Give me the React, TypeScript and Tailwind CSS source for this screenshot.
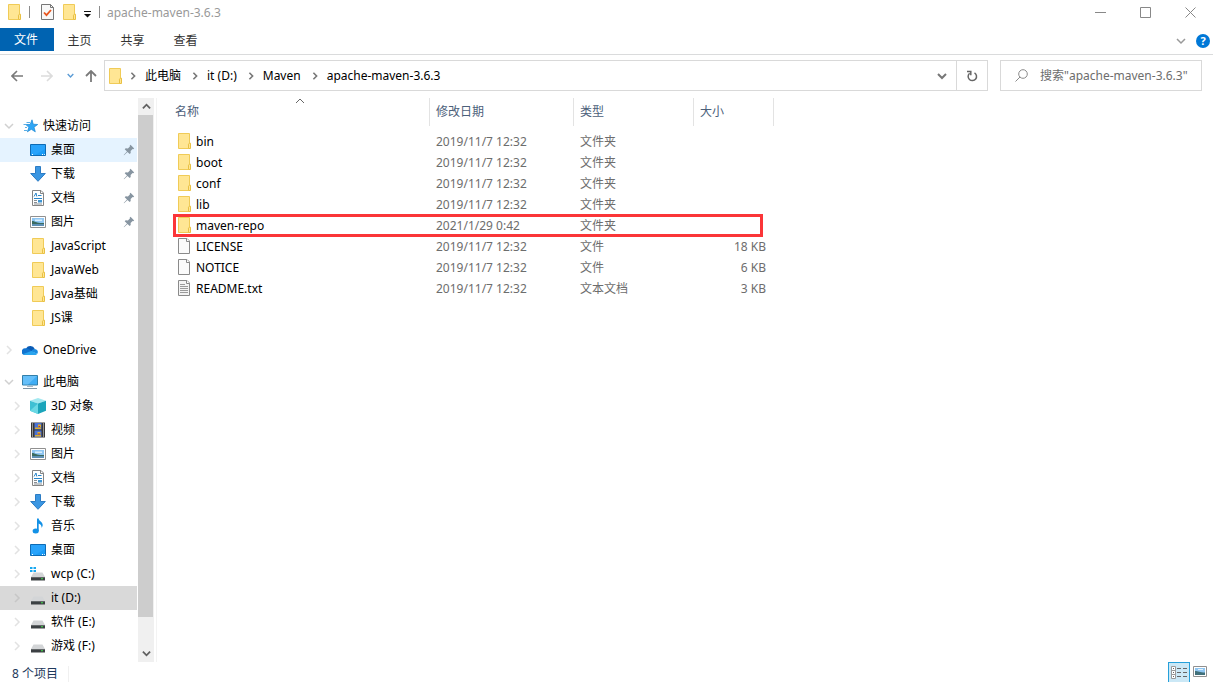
import type { ReactNode } from "react";
import clsx from "clsx";

type IconName =
  | "star"
  | "desktop"
  | "download"
  | "document"
  | "picture"
  | "folder"
  | "onedrive"
  | "pc"
  | "cube"
  | "video"
  | "music"
  | "systemDrive"
  | "drive";

type NavItem = {
  label: string;
  icon: IconName;
  pinned?: boolean;
  expandable?: boolean;
  state?: "hover" | "selected";
};

type NavGroup = {
  label: string;
  icon: IconName;
  open?: boolean;
  items: NavItem[];
};

const navGroups: NavGroup[] = [
  {
    label: "快速访问",
    icon: "star",
    open: true,
    items: [
      { label: "桌面", icon: "desktop", pinned: true, state: "hover" },
      { label: "下载", icon: "download", pinned: true },
      { label: "文档", icon: "document", pinned: true },
      { label: "图片", icon: "picture", pinned: true },
      { label: "JavaScript", icon: "folder" },
      { label: "JavaWeb", icon: "folder" },
      { label: "Java基础", icon: "folder" },
      { label: "JS课", icon: "folder" },
    ],
  },
  { label: "OneDrive", icon: "onedrive", items: [] },
  {
    label: "此电脑",
    icon: "pc",
    open: true,
    items: [
      { label: "3D 对象", icon: "cube", expandable: true },
      { label: "视频", icon: "video", expandable: true },
      { label: "图片", icon: "picture", expandable: true },
      { label: "文档", icon: "document", expandable: true },
      { label: "下载", icon: "download", expandable: true },
      { label: "音乐", icon: "music", expandable: true },
      { label: "桌面", icon: "desktop", expandable: true },
      { label: "wcp (C:)", icon: "systemDrive", expandable: true },
      { label: "it (D:)", icon: "drive", expandable: true, state: "selected" },
      { label: "软件 (E:)", icon: "drive", expandable: true },
      { label: "游戏 (F:)", icon: "drive", expandable: true },
    ],
  },
];

const files = [
  { name: "bin", date: "2019/11/7 12:32", type: "文件夹", size: "", kind: "folder" },
  { name: "boot", date: "2019/11/7 12:32", type: "文件夹", size: "", kind: "folder" },
  { name: "conf", date: "2019/11/7 12:32", type: "文件夹", size: "", kind: "folder" },
  { name: "lib", date: "2019/11/7 12:32", type: "文件夹", size: "", kind: "folder" },
  { name: "maven-repo", date: "2021/1/29 0:42", type: "文件夹", size: "", kind: "folder", marked: true },
  { name: "LICENSE", date: "2019/11/7 12:32", type: "文件", size: "18 KB", kind: "file" },
  { name: "NOTICE", date: "2019/11/7 12:32", type: "文件", size: "6 KB", kind: "file" },
  { name: "README.txt", date: "2019/11/7 12:32", type: "文本文档", size: "3 KB", kind: "text" },
];

const crumbs = ["此电脑", "it (D:)", "Maven", "apache-maven-3.6.3"];

const Folder = () => (
  <svg width="14" height="16" viewBox="0 0 14 16" className="shrink-0" aria-hidden="true">
    <path d="M.5.5h11v9.7l-1 .8v4.500H.5z" fill="#ffe694" stroke="#f0cb57" />
    <path d="M10.500 15.500v-4.200l1-1.100h1v5.300z" fill="#ffe694" stroke="#e9c043" />
  </svg>
);

const Page = ({ lines }: { lines?: boolean }) => (
  <svg width="14" height="16" viewBox="0 0 14 16" className="shrink-0" aria-hidden="true">
    <path d="M.5.5h8.500l2.500 2.500v12.500H.5z" fill={lines ? "#f4f4f4" : "#fbfbfb"} stroke="#8a8a8a" />
    <path d="M8.500.5v3h3" fill="#fff" stroke="#8a8a8a" />
    {lines && <path d="M2 4.500h5M2 6.500h8M2 8.500h8M2 10.500h8M2 12.500h8" stroke="#9b9b9b" />}
  </svg>
);

type ChevronProps = { dir: "up" | "down" | "right"; size?: number; weight?: number; className?: string };

const chevronPath = {
  up: "M1 7l4-4 4 4",
  down: "M1 3l4 4 4-4",
  right: "M3 1l4 4-4 4",
};

const Chevron = ({ dir, size = 10, weight = 1, className }: ChevronProps) => (
  <svg
    width={size}
    height={size}
    viewBox="0 0 10 10"
    fill="none"
    stroke="currentColor"
    strokeWidth={weight}
    className={clsx("shrink-0", className)}
    aria-hidden="true"
  >
    <path d={chevronPath[dir]} />
  </svg>
);

const drivePaths = (
  <>
    <path d="M3.500 6.500h9L15 11H1z" fill="#d3d5d7" />
    <path d="M1 11h14v3.500H1z" fill="#3c4043" />
    <path d="M1 11h14v.8H1z" fill="#6d7174" />
    <path d="M11 12.300h2v1h-2z" fill="#41e04b" />
  </>
);

const iconArt: Record<IconName, ReactNode> = {
  folder: null,
  star: (
    <>
      <path d="M10 1.800l1.200 4.400 4.500.3-3.700 2.700 1.300 4.600-4-2.500-3.900 2.500 1.500-4.500-3-2.700 4.300-.2z" fill="#2ea6f6" stroke="#1484d2" strokeWidth=".7" />
      <path d="M4.500 4.500h3.500M1.500 6.500h3M3 9.500h2M2 12.500h3" stroke="#59aee6" />
    </>
  ),
  desktop: (
    <>
      <path d="M.5 2.500h15v11H.5z" fill="#1b9cf7" stroke="#0e6bb4" />
      <path d="M1 3h14v4L5 13H1z" fill="#3aaeff" opacity=".45" />
      <path d="M2 12.500h1M12 12.500h1M14 12.500h.8" stroke="#fff" />
    </>
  ),
  download: <path d="M5.500.5h5v7h4.800L8 15.300.7 7.500h4.800z" fill="#3a96e2" stroke="#2c7cc4" />,
  document: (
    <>
      <path d="M2.500.5h8.500l2.500 2.500v12.500h-11z" fill="#fff" stroke="#858585" />
      <path d="M10.500.5v3h3" fill="none" stroke="#858585" />
      <path d="M4 6.500l2-3.500.8 3.500M8 5.500h3.500M4 8.500h8" fill="none" stroke="#2986c9" />
      <path d="M4 10.500h3M4 12.500h3M4 14h8" stroke="#8a8f94" />
      <path d="M8 10h4v2.500H8z" fill="#3f96d4" />
    </>
  ),
  picture: (
    <>
      <path d="M.5 2.500h15v11H.5z" fill="#fff" stroke="#909090" />
      <path d="M2 4h12v8H2z" fill="#8fc6f2" />
      <path d="M5 5.500h7v1.500H5z" fill="#d9eefc" />
      <path d="M2 7c3 0 5 2.500 12 2v1H2z" fill="#3b6b60" />
      <path d="M2 10h12v2H2z" fill="#5d8fb4" />
    </>
  ),
  onedrive: (
    <>
      <path d="M4 6.500A5 5 0 0 1 12.800 7L8 11z" fill="#0a5bb5" />
      <path d="M3.800 6.300a3.600 3.600 0 0 1 2.800.7L11 10l-8.500 3A3.400 3.400 0 0 1 3.800 6.300z" fill="#1173cf" />
      <path d="M12.600 6.900a3.100 3.100 0 0 1 2.700 4.800L9 9.500a5 5 0 0 1 3.600-2.600z" fill="#1a8ae0" />
      <path d="M9.300 9l6 2.700c-.5.900-1.400 1.300-2.500 1.300H3.200c-.8 0-1.400-.3-1.900-.9z" fill="#29a4ee" />
    </>
  ),
  pc: (
    <>
      <path d="M.5 1.500h15v9.500H.5z" fill="#3fadf5" stroke="#327fa9" />
      <path d="M1 2h14l-9 8.500H1z" fill="#7fcbfb" opacity=".6" />
      <path d="M5 12.500h6" stroke="#a9b8c2" />
      <path d="M1 14.500h14" stroke="#7f96a6" />
    </>
  ),
  cube: (
    <>
      <path d="M8 0l8 2.800L8 5.500 0 2.800z" fill="#a3e8f0" />
      <path d="M0 2.800l8 2.700V16l-8-3.300z" fill="#3fc0d4" />
      <path d="M16 2.800L8 5.500V16l8-3.300z" fill="#1ba5bb" />
      <path d="M0 12.700l8-7.200V16z" fill="#6ad8e4" />
    </>
  ),
  video: (
    <>
      <path d="M1 .5h14v15H1z" fill="#383838" />
      <path d="M4.500 1h7v6.500h-7zM4.500 8.500h7V15h-7z" fill="#4a72d6" />
      <path d="M8 2.500h3v2.500H8zM5 5.500h6v1.500H5zM7.500 10h3v2.500h-3zM5 13h6v1.500H5z" fill="#e0ad2c" />
      <path d="M8.500 4h1.500v1H8.500zM8 11.500h2v1H8z" fill="#b53a2a" />
      <path d="M2.500 1.500v14M13.500 1.500v14" stroke="#f2f2f2" strokeDasharray="1 1" />
    </>
  ),
  music: (
    <>
      <path d="M7 .5h1.700c.2 2.600 4 3.400 4 6.500 0 1.200-.5 2-1.200 2.800.3-2.300-1-3.500-2.800-4.300V13H7z" fill="#1391e6" />
      <ellipse cx="5.700" cy="13" rx="3.100" ry="2.500" fill="#1391e6" />
    </>
  ),
  drive: drivePaths,
  systemDrive: (
    <>
      {drivePaths}
      <path d="M0 1h2.500v2H0zM3.500 1H6v2H3.500zM0 4h2.500v2H0zM3.500 4H6v2H3.500z" fill="#18a8f0" />
    </>
  ),
};

const Icon = ({ name }: { name: IconName }) =>
  name === "folder" ? (
    <span className="flex w-4 shrink-0 justify-end">
      <Folder />
    </span>
  ) : (
    <svg width="16" height="16" viewBox="0 0 16 16" className="shrink-0" aria-hidden="true">
      {iconArt[name]}
    </svg>
  );

const Pin = () => (
  <svg width="12" height="12" viewBox="0 0 12 12" className="ml-auto shrink-0" aria-hidden="true">
    <path d="M7.500.8l3.700 3.700-1 .7-.6-.1-2 2 .1 2-1 1L4.500 8 1 11.200l-.3-.3L4 7.400 1.700 5.200l1-1 2.200.2 2-2-.2-.7z" fill="#8795a1" />
  </svg>
);

const TitleBar = () => (
  <div className="mb-1 flex h-6 items-center pl-2">
    <Folder />
    <span className="ml-[7px] h-3 w-px bg-[#8c8c8c]" />
    <button type="button" aria-label="属性" className="ml-[11px]">
      <svg width="13" height="16" viewBox="0 0 13 16" aria-hidden="true">
        <path d="M.5.5h9l3 3v12H.5z" fill="#f8f8f8" stroke="#777" />
        <path d="M9.500.5v3h3" fill="none" stroke="#777" />
        <path d="M3 8.500l2.500 2.700L10 6" fill="none" stroke="#e8561f" strokeWidth="1.800" />
      </svg>
    </button>
    <button type="button" aria-label="新建文件夹" className="ml-[9px]">
      <Folder />
    </button>
    <button type="button" aria-label="自定义快速访问工具栏" className="ml-1.5 pt-1">
      <svg width="9" height="8" viewBox="0 0 9 8" aria-hidden="true">
        <path d="M1 1.500h7" stroke="#111" />
        <path d="M1 4h7L4.500 7.500z" fill="#111" />
      </svg>
    </button>
    <span className="ml-[7px] h-3 w-px bg-[#8c8c8c]" />
    <h1 className="ml-[7px] pt-0.5 text-[#999]">apache-maven-3.6.3</h1>
    <div className="ml-auto flex text-[#888]">
      <button type="button" aria-label="最小化" className="flex h-6 w-[45px] items-center justify-center">
        <svg width="11" height="11" viewBox="0 0 11 11" stroke="currentColor" aria-hidden="true">
          <path d="M0 5.500h11" />
        </svg>
      </button>
      <button type="button" aria-label="最大化" className="flex h-6 w-[45px] items-center justify-center">
        <svg width="11" height="11" viewBox="0 0 11 11" fill="none" stroke="currentColor" aria-hidden="true">
          <path d="M.5.5h10v10H.5z" />
        </svg>
      </button>
      <button type="button" aria-label="关闭" className="flex h-6 w-[45px] items-center justify-center">
        <svg width="11" height="11" viewBox="0 0 11 11" stroke="currentColor" aria-hidden="true">
          <path d="M.5.5l10 10M10.500.5l-10 10" />
        </svg>
      </button>
    </div>
  </div>
);

const Ribbon = () => (
  <div className="flex h-[27px] items-start border-b border-[#dadbdc]">
    <button type="button" className="h-[23px] w-[54px] bg-[#0063b1] pr-0.5 text-white">
      文件
    </button>
    {["主页", "共享", "查看"].map((tab) => (
      <button key={tab} type="button" className="h-[23px] w-[53px] pt-0.5 pr-0.5 text-[#333]">
        {tab}
      </button>
    ))}
    <div className="ml-auto flex h-[26px] items-center gap-2.5 pr-[3px]">
      <button type="button" aria-label="展开功能区">
        <Chevron dir="down" weight={1.5} className="text-[#999]" />
      </button>
      <button
        type="button"
        aria-label="帮助"
        className="flex size-3.5 items-center justify-center rounded-full bg-[#0078d7] text-[11px] font-bold text-white"
      >
        ?
      </button>
    </div>
  </div>
);

const AddressBar = () => (
  <div className="flex items-center pt-[5px] pr-[11px] pb-[7px] pl-[11px]">
    <button type="button" aria-label="后退" className="text-[#7a7a7a]">
      <svg width="12" height="12" viewBox="0 0 12 12" fill="none" stroke="currentColor" strokeWidth="1.600" aria-hidden="true">
        <path d="M12 6H1M6 1L1 6l5 5" />
      </svg>
    </button>
    <button type="button" aria-label="前进" className="ml-[18px] text-[#dcdcdc]">
      <svg width="12" height="12" viewBox="0 0 12 12" fill="none" stroke="currentColor" strokeWidth="1.600" aria-hidden="true">
        <path d="M0 6h11M6 1l5 5-5 5" />
      </svg>
    </button>
    <button type="button" aria-label="最近浏览的位置" className="ml-3.5">
      <Chevron dir="down" size={7} weight={2} className="text-[#5a9bd5]" />
    </button>
    <button type="button" aria-label="上移" className="ml-[11px] text-[#7a7a7a]">
      <svg width="12" height="12" viewBox="0 0 12 12" fill="none" stroke="currentColor" strokeWidth="1.800" aria-hidden="true">
        <path d="M6 12V1M1 6l5-5 5 5" />
      </svg>
    </button>
    <div className="ml-[7px] flex h-[31px] flex-1 items-center border border-[#d9d9d9] pl-1">
      <Folder />
      <nav aria-label="路径" className="-ml-1 flex items-center">
        {crumbs.map((crumb) => (
          <span key={crumb} className="flex items-center">
            <Chevron dir="right" size={8} weight={2} className="mr-2 ml-2.5 text-[#777]" />
            <a href="#">{crumb}</a>
          </span>
        ))}
      </nav>
      <button type="button" aria-label="上一个位置" className="ml-auto flex h-full w-[29px] items-center justify-center border-r border-[#d9d9d9]">
        <Chevron dir="down" weight={2} className="text-[#777]" />
      </button>
      <button type="button" aria-label="刷新" className="flex h-full w-[30px] items-center justify-center text-[#666]">
        <svg width="12" height="12" viewBox="0 0 12 12" fill="none" stroke="currentColor" strokeWidth="1.500" aria-hidden="true">
          <path d="M8.500 2.800A4.200 4.200 0 1 1 3.600 3.200" />
          <path d="M1 1.500h3.800v3.800" />
        </svg>
      </button>
    </div>
    <label className="ml-3 flex h-[31px] w-[202px] items-center border border-[#d9d9d9] pl-3.5">
      <svg width="13" height="13" viewBox="0 0 13 13" fill="none" stroke="#8b8b8b" className="shrink-0" aria-hidden="true">
        <circle cx="8" cy="5" r="4.300" />
        <path d="M5 8L.5 12.500" />
      </svg>
      <input
        type="text"
        aria-label="搜索"
        placeholder='搜索"apache-maven-3.6.3"'
        className="ml-3 w-full min-w-0 outline-none placeholder:text-[#6d6d6d] placeholder:opacity-100"
      />
    </label>
  </div>
);

const NavRow = ({ item }: { item: NavItem }) => (
  <a
    href="#"
    className={clsx(
      "mr-px flex h-6 items-center pr-0.5 pl-3",
      item.state === "hover" && "bg-[#e5f3ff]",
      item.state === "selected" && "bg-[#d9d9d9]",
    )}
  >
    <span className={clsx("mr-2 w-2.5", item.state === "selected" ? "text-[#c6c6c6]" : "text-[#e2e2e2]")}>
      {item.expandable && <Chevron dir="right" weight={1.5} />}
    </span>
    <Icon name={item.icon} />
    <span className="ml-[5px]">{item.label}</span>
    {item.pinned && <Pin />}
  </a>
);

const Sidebar = () => (
  <aside className="flex">
    <nav aria-label="导航窗格" className="flex w-[138px] flex-col gap-2 pt-4 pb-1">
      {navGroups.map((group) => (
        <div key={group.label}>
          <a href="#" className="flex h-6 items-center pl-1">
            <Chevron
              dir={group.open ? "down" : "right"}
              weight={1.5}
              className={clsx("mr-2", group.open ? "text-[#d0d0d0]" : "text-[#e2e2e2]")}
            />
            <Icon name={group.icon} />
            <span className="ml-[5px]">{group.label}</span>
          </a>
          {group.items.map((item) => (
            <NavRow key={item.label} item={item} />
          ))}
        </div>
      ))}
    </nav>
    <div className="flex w-4 flex-col items-center bg-[#f0f0f0]">
      <button type="button" aria-label="向上滚动" className="flex h-[17px] w-full items-center justify-center">
        <Chevron dir="up" size={9} weight={2} className="text-[#606060]" />
      </button>
      <div className="mr-px w-[15px] grow-[18] bg-[#cdcdcd]" />
      <div className="grow" />
      <button type="button" aria-label="向下滚动" className="flex h-[17px] w-full items-center justify-center">
        <Chevron dir="down" size={9} weight={2} className="text-[#606060]" />
      </button>
    </div>
  </aside>
);

const FileIcon = ({ kind }: { kind: string }) => (
  <span className="pb-px">{kind === "folder" ? <Folder /> : <Page lines={kind === "text"} />}</span>
);

const FileTable = () => (
  <table className="w-[604px] table-fixed border-collapse text-left">
    <thead className="text-[#4c607a]">
      <tr>
        {[
          { title: "名称", width: "w-[260px]", pad: "pl-[5px]" },
          { title: "修改日期", width: "w-36", pad: "pl-1.5" },
          { title: "类型", width: "w-30", pad: "pl-1.5" },
          { title: "大小", width: "w-20", pad: "pl-1.5" },
        ].map((col, idx) => (
          <th key={col.title} scope="col" className={clsx("relative p-0 pb-[5px] font-normal", col.width)}>
            <div className={clsx("flex h-7 items-center border-r border-[#e3e3e3]", col.pad)}>{col.title}</div>
            {idx === 0 && <Chevron dir="up" className="absolute -top-0.5 left-1/2 -translate-x-1/2 text-[#666]" />}
          </th>
        ))}
      </tr>
    </thead>
    <tbody className="text-[#6d6d6d]">
      {files.map((file) => (
        <tr key={file.name} className="relative h-[21px]">
          <td className="p-0 pl-2 text-black">
            <a href="#" className="flex items-center gap-1">
              <FileIcon kind={file.kind} />
              {file.name}
            </a>
            {file.marked && (
              <span className="pointer-events-none absolute -top-px right-[11px] -bottom-px left-[3px] border-3 border-[#fb3538]" />
            )}
          </td>
          <td className="p-0 pl-1.5">{file.date}</td>
          <td className="p-0 pl-1.5">{file.type}</td>
          <td className="p-0 pr-2 text-right">{file.size}</td>
        </tr>
      ))}
    </tbody>
  </table>
);

const StatusBar = () => (
  <footer className="flex h-5 items-center pl-3 text-[#1e395b]">
    <span className="mt-[3px] border-r border-[#f0f0f0] pr-2.5">8 个项目</span>
    <div className="ml-auto flex h-full items-center pr-1.5">
      <button
        type="button"
        aria-label="详细信息"
        className="flex h-full w-[22px] items-center justify-center border border-b-0 border-[#26a0da] bg-[#cbe8f6]"
      >
        <svg width="17" height="13" viewBox="0 0 17 13" fill="none" aria-hidden="true">
          <path d="M.5.5h4v4h-4zM.5 4.500h4v4h-4zM.5 8.500h4v4h-4z" fill="#fff" stroke="#999" />
          <path d="M2 2.500h1M2 6.500h1M2 10.500h1M6 2.500h4M6 6.500h4M6 10.500h4M12 2.500h4M12 6.500h4M12 10.500h4" stroke="#666" />
        </svg>
      </button>
      <button type="button" aria-label="大图标" className="ml-[3px]">
        <svg width="14" height="12" viewBox="0 0 14 12" aria-hidden="true">
          <path d="M.5.5h13v10H.5z" fill="#fff" stroke="#909090" />
          <path d="M2 2h10v7H2z" fill="#8fc6f2" />
          <path d="M2 5c3 0 5 1.500 10 1.500V9H2z" fill="#41707a" />
          <path d="M5 3h5v1H5z" fill="#e1f1fc" />
        </svg>
      </button>
    </div>
  </footer>
);

export default function App() {
  return (
    <div className="flex min-h-screen flex-col bg-white font-['Noto_Sans','Noto_Sans_CJK_SC',sans-serif] text-[12px] leading-4 text-black">
      <header>
        <TitleBar />
        <Ribbon />
        <AddressBar />
      </header>
      <div className="flex flex-1">
        <Sidebar />
        <main className="ml-0.5 flex-1 border-l border-[#f3f3f3] pl-[13px]">
          <FileTable />
        </main>
      </div>
      <StatusBar />
    </div>
  );
}
